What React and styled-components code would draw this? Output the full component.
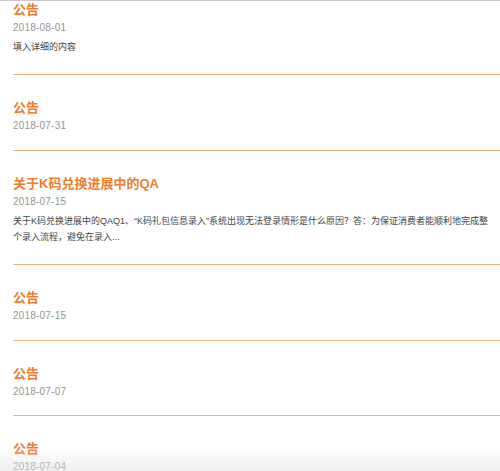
import React from 'react';
import styled, { createGlobalStyle } from 'styled-components';

const GlobalStyle = createGlobalStyle`
  html, body {
    margin: 0;
    padding: 0;
    background: #fff;
    font-family: "Liberation Sans", "Noto Sans CJK SC", sans-serif;
  }
`

const Viewport = styled.div`
  position: relative;
  width: 500px;
  height: 471px;
  overflow: hidden;
  border-top: 1px solid #c9c9c9;
  box-sizing: border-box;
`

const List = styled.ul`
  list-style: none;
  margin: -24px 0 0 13px;
  padding: 0;
`

const Item = styled.li`
  padding: 24px 0 15.5px;
  border-bottom: 1px solid #f3b07c;
`

const Title = styled.h3`
  margin: 0;
  font-size: 13px;
  line-height: 18px;
  font-weight: bold;
  color: #f07c2c;
`

const Date = styled.p`
  margin: 0;
  font-size: 10px;
  line-height: 17px;
  letter-spacing: 0.2px;
  color: #959595;
`

const Summary = styled.p`
  margin: 3px 0 3px;
  padding-right: 6px;
  font-size: 9px;
  line-height: 16.5px;
  color: #444;
`

const BottomFade = styled.div`
  position: absolute;
  left: 0;
  right: 0;
  bottom: 0;
  height: 26px;
  background: linear-gradient(to bottom, rgba(255, 255, 255, 0), rgba(226, 226, 226, 0.55));
  pointer-events: none;
`

const notices = [
  { title: '公告', date: '2018-08-01', summary: '填入详细的内容' },
  { title: '公告', date: '2018-07-31' },
  {
    title: '关于K码兑换进展中的QA',
    date: '2018-07-15',
    summary: '关于K码兑换进展中的QAQ1、“K码礼包信息录入”系统出现无法登录情形是什么原因？答：为保证消费者能顺利地完成整个录入流程，避免在录入...',
  },
  { title: '公告', date: '2018-07-15' },
  { title: '公告', date: '2018-07-07' },
  { title: '公告', date: '2018-07-04' },
];

function renderSummary(text) {
  if (!text) {return null;}
  return <Summary>{text}</Summary>;
}

function App() {
  return (
    <>
      <GlobalStyle />
      <Viewport>
        <List>
          {notices.map((n, i) => (
            <Item key={i}>
              <Title>{n.title}</Title>
              <Date>{n.date}</Date>
              {renderSummary(n.summary)}
            </Item>
          ))}
        </List>
        <BottomFade />
      </Viewport>
    </>
  )
}

export default App;
